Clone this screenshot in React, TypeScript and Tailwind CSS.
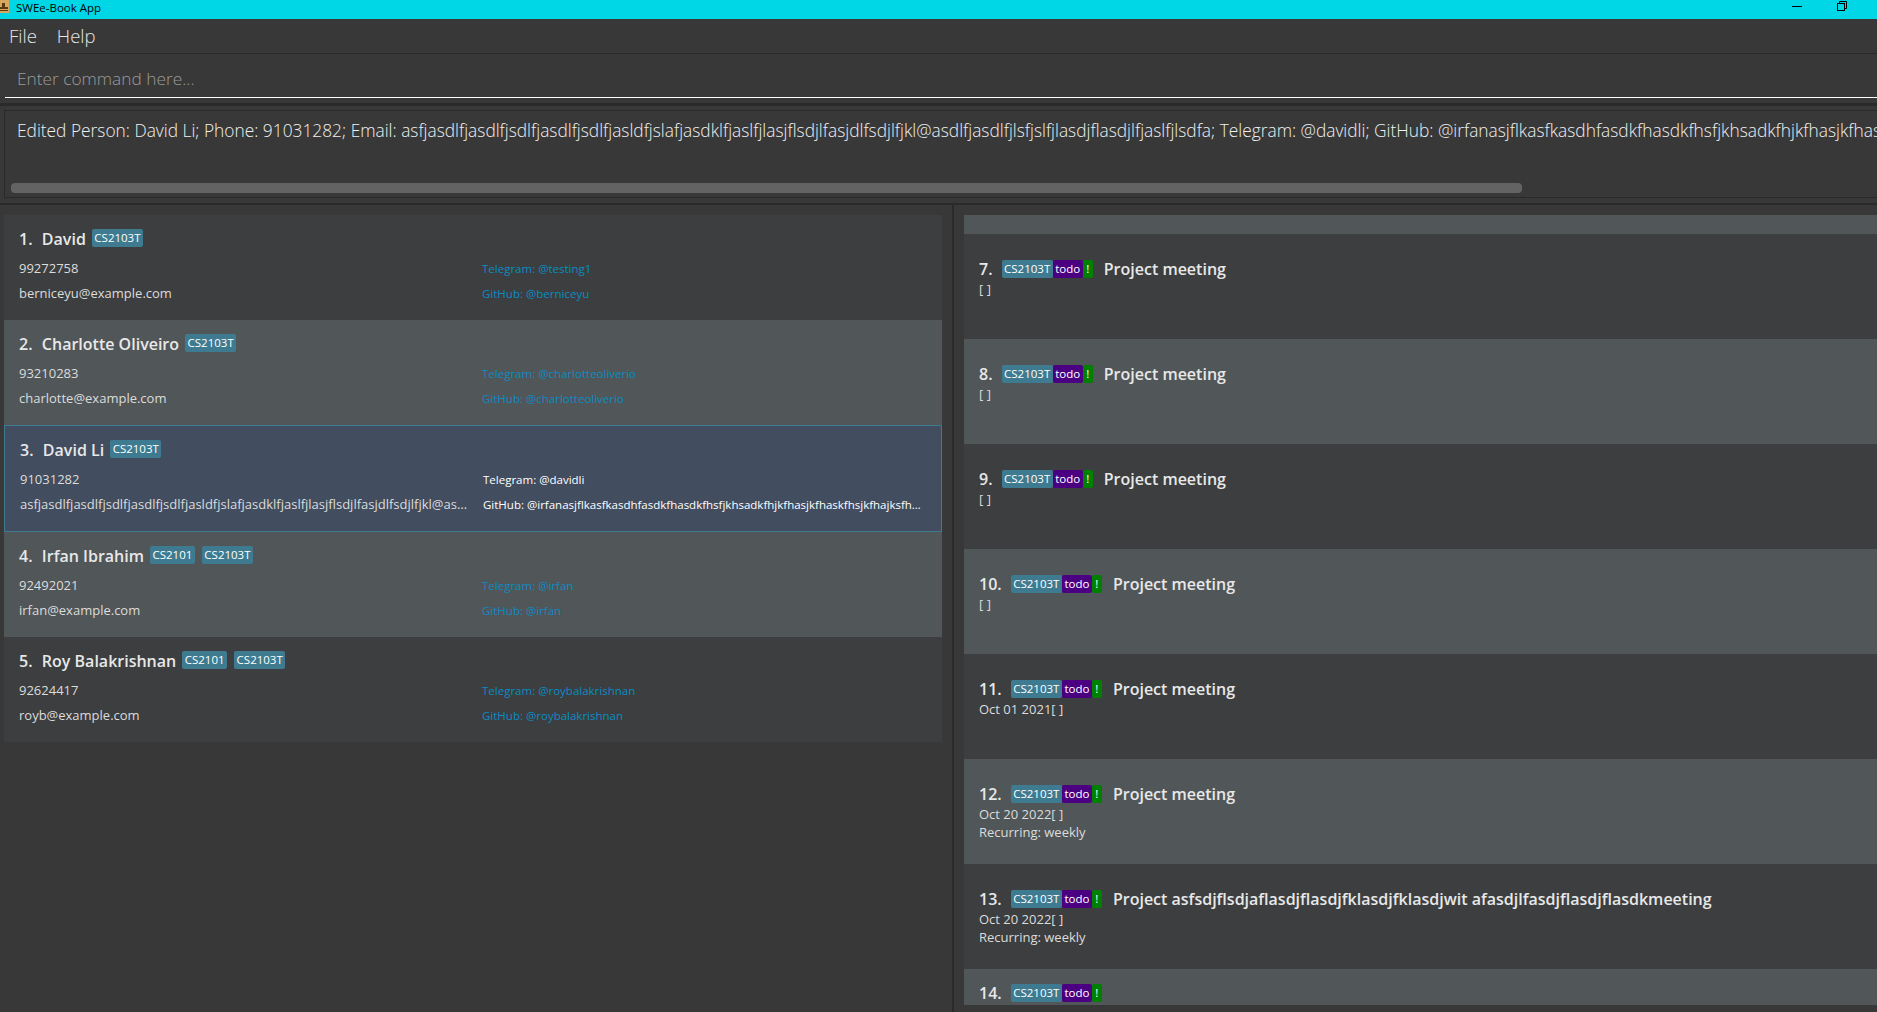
const Tag = ({ label, bg = "bg-[#3e7b91]", top = false }: { label: string; bg?: string; top?: boolean }) => (
  <span className={`${bg} ${top ? "self-start" : ""} text-white text-[11.5px] leading-[18px] h-[18px] px-[2.5px] rounded-[2px] whitespace-nowrap`}>{label}</span>
);

const people = [
  { n: 1, name: "David", tags: ["CS2103T"], phone: "99272758", email: "berniceyu@example.com", tg: "@testing1", gh: "@berniceyu" },
  { n: 2, name: "Charlotte Oliveiro", tags: ["CS2103T"], phone: "93210283", email: "charlotte@example.com", tg: "@charlotteoliverio", gh: "@charlotteoliverio" },
  { n: 3, name: "David Li", tags: ["CS2103T"], phone: "91031282", email: "asfjasdlfjasdlfjsdlfjasdlfjsdlfjasldfjslafjasdklfjaslfjlasjflsdjlfasjdlfsdjlfjkl@asdlfjasdlfjlsfjslfjlasdjflasdjlfjaslfjlsdfa", tg: "@davidli", gh: "@irfanasjflkasfkasdhfasdkfhasdkfhsfjkhsadkfhjkfhasjkfhaskfhsjkfhajksfhaskjfhaskjfh", selected: true },
  { n: 4, name: "Irfan Ibrahim", tags: ["CS2101", "CS2103T"], phone: "92492021", email: "irfan@example.com", tg: "@irfan", gh: "@irfan" },
  { n: 5, name: "Roy Balakrishnan", tags: ["CS2101", "CS2103T"], phone: "92624417", email: "royb@example.com", tg: "@roybalakrishnan", gh: "@roybalakrishnan" },
];

const tasks = [
  { n: 7, title: "Project meeting" },
  { n: 8, title: "Project meeting" },
  { n: 9, title: "Project meeting" },
  { n: 10, title: "Project meeting" },
  { n: 11, title: "Project meeting", date: "Oct 01 2021" },
  { n: 12, title: "Project meeting", date: "Oct 20 2022", rec: true },
  { n: 13, title: "Project asfsdjflsdjaflasdjflasdjfklasdjfklasdjwit afasdjlfasdjflasdjflasdkmeeting", date: "Oct 20 2022", rec: true },
];

const PersonRow = ({ p }: { p: (typeof people)[number] }) => {
  const link = p.selected ? "text-white" : "text-[#0a8cc4]";
  const bg = p.selected
    ? "h-[107px] bg-[#424d5f] border border-[#3e7b91]"
    : p.n % 2 === 1
      ? "h-[105px] bg-[#3c3e3f]"
      : "h-[105px] bg-[#515658]";
  return (
    <div className={`shrink-0 flex flex-col pl-[15px] pr-[14px] ${bg}`}>
      <div className="flex items-center h-[20px] mt-[14px] gap-[7px]">
        <span className="text-[16px] font-semibold text-[#e8e8e8] whitespace-pre leading-[20px] -mr-px">
          <span className="mr-px">{p.n}.  </span>
          {p.name}
        </span>
        {p.tags.map((t) => <Tag key={t} label={t} top />)}
      </div>
      <div className="grid grid-cols-[463px_1fr] leading-[25px] mt-[7px]">
        <span className="text-[13px] text-[#dcdcdc]">{p.phone}</span>
        <span className={`text-[11.5px] ${link}`}>Telegram: {p.tg}</span>
        <span className="text-[13px] text-[#dcdcdc] truncate pr-[13px]">{p.email}</span>
        <span className={`text-[11.5px] ${link} truncate`}>GitHub: {p.gh}</span>
      </div>
    </div>
  );
};

const TaskHead = ({ n, title }: { n: number; title?: string }) => (
  <div className="flex items-center h-[20px]">
    <span className="text-[16px] font-semibold text-[#e8e8e8] leading-[20px] mr-[9px]">{n}.</span>
    <Tag label="CS2103T" />
    <Tag label="todo" bg="bg-[#4b0082]" />
    <span className="bg-[#008000] text-white text-[11.5px] leading-[18px] h-[18px] px-[3.5px] rounded-[2px]">!</span>
    {title && <span className="ml-[11px] text-[16px] font-semibold text-[#e8e8e8] leading-[20px] whitespace-nowrap">{title}</span>}
  </div>
);

const TaskRow = ({ t }: { t: (typeof tasks)[number] }) => (
  <div className={`h-[105px] shrink-0 pl-[15px] pt-[25px] ${t.n % 2 === 1 ? "bg-[#3c3e3f]" : "bg-[#515658]"}`}>
    <TaskHead n={t.n} title={t.title} />
    <div className="text-[13px] leading-[18px] text-[#dcdcdc] mt-px">{t.date}[ ]</div>
    {t.rec && <div className="text-[13px] leading-[18px] text-[#dcdcdc]">Recurring: weekly</div>}
  </div>
);

export default function App() {
  const result =
    "Edited Person: David Li; Phone: 91031282; Email: asfjasdlfjasdlfjsdlfjasdlfjsdlfjasldfjslafjasdklfjaslfjlasjflsdjlfasjdlfsdjlfjkl@asdlfjasdlfjlsfjslfjlasdjflasdjlfjaslfjlsdfa; Telegram: @davidli; GitHub: @irfanasjflkasfkasdhfasdkfhasdkfhsfjkhsadkfhjkfhasjkfhaskfhsjkfhasjkfhaskjfh";
  return (
    <div className="h-[1012px] w-[1877px] overflow-hidden flex flex-col bg-[#383838] [font-family:'Open_Sans',sans-serif]">
      <div className="h-[19px] shrink-0 bg-[#00d7e6] flex items-start relative">
        <svg width="9" height="13" viewBox="0 0 9 13" className="mr-[7px]">
          <rect x="0" y="0" width="9" height="13" fill="#d9a860" />
          <path d="M2 3h3v4h3v2H0V7h2zM0 10h8v1H0z" fill="#5a3a10" />
        </svg>
        <span className="text-[11.5px] text-black leading-[15px]">SWEe-Book App</span>
        <div className="ml-auto flex items-start h-full">
          <svg width="10" height="12" viewBox="0 0 10 12" className="mr-[35px]"><path d="M0 6.5h10" stroke="#000" strokeWidth="1" /></svg>
          <svg width="10" height="12" viewBox="0 0 10 12" className="mr-[30px]" fill="none" stroke="#000"><rect x="0.5" y="3.5" width="7" height="7" /><path d="M2.5 3V1.5h7v7H8" /></svg>
        </div>
      </div>

      <div className="h-[35px] shrink-0 flex items-center border-b border-[#2a2a2a] pl-[9px] gap-[20px] text-[18.5px] font-light text-[#e6e6e6]">
        <span>File</span>
        <span>Help</span>
      </div>

      <div className="h-[44px] shrink-0 ml-[5px] flex items-center border-b border-white pl-[12px] pt-[6px] text-[17.3px] font-light text-[#9a9a9a]">
        Enter command here...
      </div>

      <div className="h-[8px] shrink-0 border-b-[3px] border-[#2a2a2a]" />

      <div className="h-[88px] shrink-0 mt-[4px] ml-[4px] border border-[#2a2a2a] border-r-0 relative overflow-hidden pl-[12px] pt-[7px]">
        <div className="text-[17.33px] font-light text-[#f0f0f0] whitespace-nowrap leading-[24px]">{result}</div>
        <div className="absolute left-[6px] top-[72px] w-[1511px] h-[10px] rounded-[4px] bg-[#636363]" />
      </div>

      <div className="h-[7px] shrink-0 border-b-[2px] border-[#2a2a2a]" />

      <div className="flex-1 flex min-h-0">
        <div className="w-[952px] shrink-0 pl-[4px] pr-[10px] pt-[10px] flex flex-col">
          {people.map((p) => <PersonRow key={p.n} p={p} />)}
        </div>
        <div className="w-[2px] shrink-0 bg-[#2a2a2a]" />
        <div className="flex-1 min-w-0 pl-[10px] pt-[10px] pb-[7px] flex flex-col overflow-hidden">
          <div className="flex-1 min-h-0 flex flex-col overflow-hidden">
            <div className="h-[19px] shrink-0 bg-[#515658]" />
            {tasks.map((t) => <TaskRow key={t.n} t={t} />)}
            <div className="h-[36px] shrink-0 pl-[15px] pt-[14px] bg-[#515658]">
              <TaskHead n={14} />
            </div>
          </div>
        </div>
      </div>
    </div>
  );
}
